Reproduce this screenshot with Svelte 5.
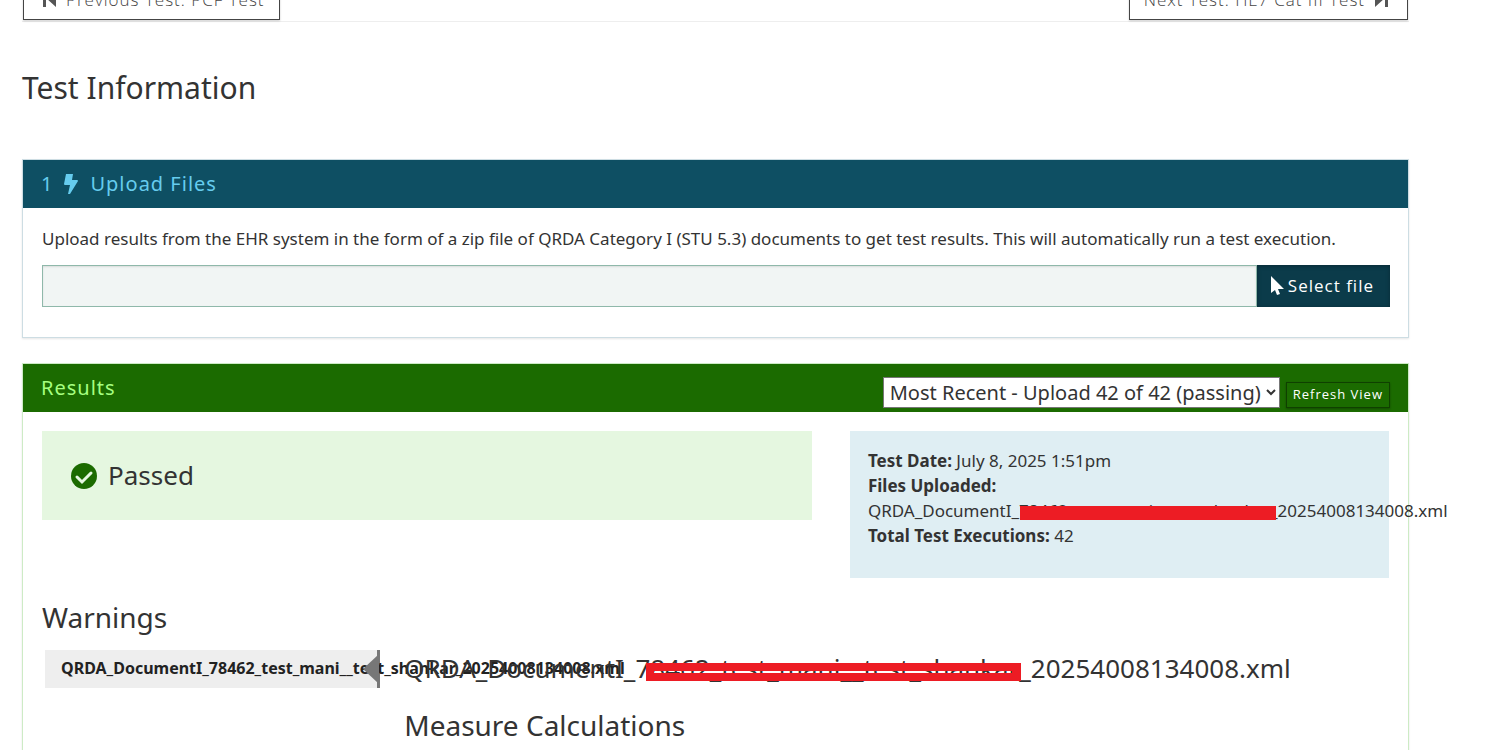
<script>
    const tests = {
        previous: 'PCF Test',
        next: 'HL7 Cat III Test'
    }

    const executions = [
        { id: 42, label: 'Most Recent - Upload 42 of 42 (passing)' }
    ]

    const fileName = 'QRDA_DocumentI_78462_test_mani__test_shankar_20254008134008.xml'

    let selected = $state(42)
</script>

<main class="page">
    <nav class="test-nav">
        <a href="#previous">
            <svg width="13" height="16" viewBox="0 0 13 16"><path d="M0 0h3v8L13 0v16L3 7v9H0z" /></svg>
            Previous Test: {tests.previous}
        </a>
        <a href="#next">
            Next Test: {tests.next}
            <svg width="13" height="16" viewBox="0 0 13 16"><path d="M13 0h-3v7L0 0v16l10-9v9h3z" /></svg>
        </a>
    </nav>

    <h1>Test Information</h1>

    <section class="panel upload">
        <header>
            <h2>
                <span>1</span>
                <svg class="bolt" width="14" height="20" viewBox="0 0 14 20"><path d="M2 0h7l-1 6h5c1 0 1 1 1 1L6 20H4l2-9H1c-1 0-1-1-1-1z" /></svg>
                <span>Upload Files</span>
            </h2>
        </header>
        <div class="panel-body">
            <label for="results-file">Upload results from the EHR system in the form of a zip file of QRDA Category I (STU 5.3) documents to get test results. This will automatically run a test execution.</label>
            <div class="file-row">
                <input id="results-file" type="text" readonly />
                <button type="button">
                    <svg width="13" height="19" viewBox="0 0 13 19"><path d="M0 0v17l4-3 2 5 3-1-2-5h6z" /></svg>
                    Select file
                </button>
            </div>
        </div>
    </section>

    <section class="panel results">
        <header>
            <h2>Results</h2>
            <form class="view-picker">
                <select aria-label="Test execution" bind:value={selected}>
                    {#each executions as execution (execution.id)}
                        <option value={execution.id}>{execution.label}</option>
                    {/each}
                </select>
                <button type="button">Refresh View</button>
            </form>
        </header>
        <div class="panel-body">
            <div class="summary">
                <div class="status">
                    <svg width="26" height="26" viewBox="0 0 26 26">
                        <circle cx="13" cy="13" r="13" />
                        <path d="M6 14l5 5 9-9" />
                    </svg>
                    Passed
                </div>
                <div class="details">
                    <div><strong>Test Date:</strong> July 8, 2025 1:51pm</div>
                    <div><strong>Files Uploaded:</strong></div>
                    <div class="file">{fileName}<span class="strike"></span></div>
                    <div><strong>Total Test Executions:</strong> 42</div>
                </div>
            </div>

            <h3>Warnings</h3>
            <div class="warnings">
                <div class="tabs">
                    <a href="#file">{fileName}</a>
                </div>
                <div class="tab-content">
                    <h3 class="file">{fileName}<span class="strike double"></span></h3>
                    <h3>Measure Calculations</h3>
                </div>
            </div>
        </div>
    </section>
</main>

<style>
    :global(body) {
        margin: 0;
        background: #fff;
        overflow: hidden;
    }

    .page {
        padding: 0 77px 0 22px;
        font-family: "Noto Sans", sans-serif;
        font-size: 17px;
        line-height: 25px;
        color: #333;
    }

    .page *,
    .page *::after {
        box-sizing: border-box;
    }

    h1,
    h2,
    h3 {
        margin: 0;
        font-weight: 400;
    }

    select,
    input {
        font-family: inherit;
        border-radius: 0;
    }

    button,
    .test-nav {
        font-family: "Open Sans", sans-serif;
        letter-spacing: 1px;
    }

    .test-nav {
        display: flex;
        justify-content: space-between;
        margin-top: -22px;
        padding: 0 1px 1px;
        border-bottom: 1px solid #eee;
    }

    .test-nav a {
        display: flex;
        align-items: center;
        gap: 10px;
        height: 42px;
        padding: 0 14px 0 19px;
        border: 1px solid #444;
        box-shadow: 0 1px 2px rgba(0, 0, 0, 0.2);
        font-weight: 300;
        color: #444;
        text-decoration: none;
    }

    .test-nav a:last-child {
        padding: 0 19px 0 14px;
    }

    .test-nav svg {
        fill: #555;
    }

    h1 {
        margin: 46px 0 51px;
        font-size: 30px;
        line-height: 40px;
    }

    .panel {
        border: 1px solid #cddde3;
        box-shadow: 0 1px 2px rgba(0, 0, 0, 0.1);
    }

    .panel header {
        display: flex;
        justify-content: space-between;
        height: 48px;
        padding: 0 18px;
    }

    .panel h2 {
        display: flex;
        align-items: center;
        padding-bottom: 1px;
        font-size: 20px;
        letter-spacing: 1px;
    }

    .panel-body {
        padding: 19px;
    }

    .upload {
        margin-bottom: 25px;
    }

    .upload header {
        background: #0e4f63;
        color: #66ccee;
    }

    .bolt {
        margin: 0 12px 0 11px;
        fill: #66ccee;
    }

    .upload .panel-body {
        padding: 18px 18px 30px 19px;
    }

    .upload label {
        display: block;
        margin-bottom: 14px;
    }

    .file-row {
        display: flex;
        height: 42px;
    }

    .file-row input {
        flex: 1;
        min-width: 0;
        border: 1px solid #8fb8aa;
        background: #f1f5f4;
        box-shadow: inset 0 1px 2px rgba(0, 0, 0, 0.1);
    }

    .file-row button {
        display: flex;
        align-items: center;
        gap: 4px;
        padding: 0 16px 1px 14px;
        border: 0;
        background: #0b3b4a;
        box-shadow: inset 0 1px 4px rgba(0, 0, 0, 0.3);
        font-size: 17px;
        color: #fff;
    }

    .file-row svg {
        fill: #fff;
    }

    .results {
        border-color: #cdebc5;
    }

    .results header {
        background: #1b6b00;
        color: #a6ff80;
    }

    .view-picker {
        display: flex;
        align-items: flex-end;
        gap: 6px;
        padding-bottom: 4px;
    }

    .view-picker select {
        height: 31px;
        padding: 0 2px;
        border: 1px solid #767676;
        background: #fff;
        font-size: 20px;
        color: #333;
    }

    .view-picker button {
        height: 26px;
        padding: 0 6px 2px;
        border: 1px solid #0f4000;
        background: #1b6b00;
        box-shadow: 0 1px 2px rgba(0, 0, 0, 0.3);
        font-size: 13px;
        color: #fff;
    }

    .summary {
        display: grid;
        grid-template-columns: repeat(12, minmax(0, 1fr));
        align-items: start;
        column-gap: 38px;
        margin-bottom: 19px;
    }

    .status {
        grid-column: span 7;
        display: flex;
        align-items: center;
        gap: 11px;
        height: 89px;
        padding: 0 29px;
        background: #e5f7e0;
        font-size: 26px;
    }

    .status circle {
        fill: #1b6b00;
    }

    .status path {
        fill: none;
        stroke: #e5f7e0;
        stroke-width: 3;
        stroke-linecap: round;
    }

    .details {
        grid-column: span 5;
        padding: 17px 18px 30px;
        background: #dfeef3;
        white-space: nowrap;
    }

    .file {
        position: relative;
    }

    .strike {
        position: absolute;
        top: 8px;
        left: 152px;
        width: 256px;
        height: 14px;
        background: #ed1c24;
    }

    .panel h3 {
        font-size: 28px;
        line-height: 40px;
    }

    .warnings {
        display: flex;
        margin-top: 13px;
        padding: 0 3px;
    }

    .tabs {
        flex: none;
        width: 25%;
    }

    .tabs a {
        display: block;
        position: relative;
        height: 38px;
        padding: 0 16px;
        border-right: 3px solid #777;
        background: #eee;
        font-size: 16px;
        font-weight: 700;
        line-height: 36px;
        color: #222;
        text-decoration: none;
        white-space: nowrap;
    }

    .tabs a::after {
        content: "";
        position: absolute;
        top: 4px;
        right: -2px;
        border: 15px solid transparent;
        border-right: 16px solid #777;
        border-left: 0;
    }

    .tab-content {
        flex: 1;
        min-width: 0;
        padding-left: 24px;
    }

    .panel .tab-content .file {
        margin-bottom: 19px;
        font-size: 26px;
        line-height: 36px;
        white-space: nowrap;
    }

    .strike.double {
        top: 13px;
        left: 242px;
        width: 375px;
        height: 18px;
        border: solid #ed1c24;
        border-width: 8px 9px 8px 8px;
        background: none;
    }
</style>
